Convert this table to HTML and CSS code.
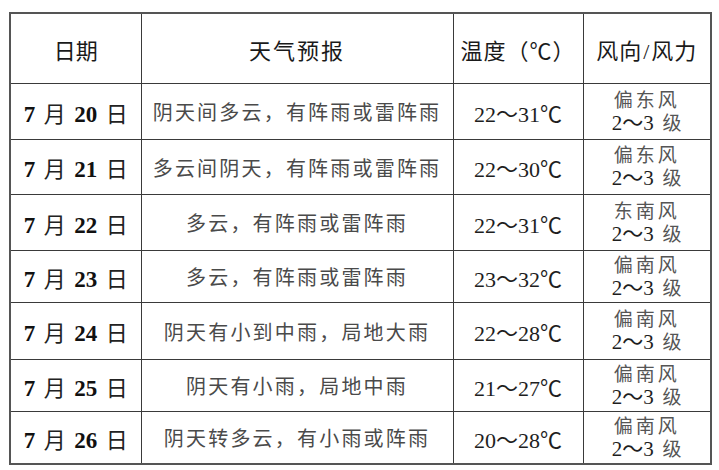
FILE: index.html
```html
<!DOCTYPE html>
<html lang="zh-CN">
<head>
<meta charset="utf-8">
<title>天气预报</title>
<link rel="stylesheet" href="styles.css">
</head>
<body>
<div class="page">
<table class="forecast">
  <colgroup>
    <col class="c-date">
    <col class="c-desc">
    <col class="c-temp">
    <col class="c-wind">
  </colgroup>
  <thead>
    <tr class="head">
      <th class="h-date">日期</th>
      <th class="h-desc">天气预报</th>
      <th class="h-temp">温度（℃）</th>
      <th class="h-wind">风向<span class="slash">/</span>风力</th>
    </tr>
  </thead>
  <tbody>
    <tr>
      <td class="date"><b>7</b> 月 <b>20</b> 日</td>
      <td class="desc">阴天间多云，有阵雨或雷阵雨</td>
      <td class="temp">22～31℃</td>
      <td class="wind"><span class="dir">偏东风</span><span class="lvl"><span class="num">2～3</span> 级</span></td>
    </tr>
    <tr>
      <td class="date"><b>7</b> 月 <b>21</b> 日</td>
      <td class="desc">多云间阴天，有阵雨或雷阵雨</td>
      <td class="temp">22～30℃</td>
      <td class="wind"><span class="dir">偏东风</span><span class="lvl"><span class="num">2～3</span> 级</span></td>
    </tr>
    <tr>
      <td class="date"><b>7</b> 月 <b>22</b> 日</td>
      <td class="desc">多云，有阵雨或雷阵雨</td>
      <td class="temp">22～31℃</td>
      <td class="wind"><span class="dir">东南风</span><span class="lvl"><span class="num">2～3</span> 级</span></td>
    </tr>
    <tr>
      <td class="date"><b>7</b> 月 <b>23</b> 日</td>
      <td class="desc">多云，有阵雨或雷阵雨</td>
      <td class="temp">23～32℃</td>
      <td class="wind"><span class="dir">偏南风</span><span class="lvl"><span class="num">2～3</span> 级</span></td>
    </tr>
    <tr>
      <td class="date"><b>7</b> 月 <b>24</b> 日</td>
      <td class="desc">阴天有小到中雨，局地大雨</td>
      <td class="temp">22～28℃</td>
      <td class="wind"><span class="dir">偏南风</span><span class="lvl"><span class="num">2～3</span> 级</span></td>
    </tr>
    <tr>
      <td class="date"><b>7</b> 月 <b>25</b> 日</td>
      <td class="desc">阴天有小雨，局地中雨</td>
      <td class="temp">21～27℃</td>
      <td class="wind"><span class="dir">偏南风</span><span class="lvl"><span class="num">2～3</span> 级</span></td>
    </tr>
    <tr>
      <td class="date"><b>7</b> 月 <b>26</b> 日</td>
      <td class="desc">阴天转多云，有小雨或阵雨</td>
      <td class="temp">20～28℃</td>
      <td class="wind"><span class="dir">偏南风</span><span class="lvl"><span class="num">2～3</span> 级</span></td>
    </tr>
  </tbody>
</table>
</div>
</body>
</html>
```
FILE: styles.css
```css
html, body {
  margin: 0;
  padding: 0;
  background: #ffffff;
}

.page {
  padding: 12px 0 0 9px;
}

.forecast {
  border-collapse: collapse;
  table-layout: fixed;
  width: 701px;
  border: 2px solid #555555;
  font-family: "Liberation Serif", "Noto Sans CJK SC", serif;
  color: #222222;
}

.c-date { width: 131px; }
.c-desc { width: 312px; }
.c-temp { width: 130px; }
.c-wind { width: 128px; }

.forecast th,
.forecast td {
  border: 1px solid #3a3a3a;
  padding: 0;
  text-align: center;
  vertical-align: middle;
}

.forecast th {
  font-weight: 400;
  font-size: 22px;
  height: 69px;
  color: #1a1a1a;
}

.h-desc { letter-spacing: 2px; }
.h-temp { letter-spacing: 1px; }
.h-wind { letter-spacing: 1px; }
.slash { margin: 0 1px; }

.forecast tbody tr:nth-child(1) td { height: 55px; }
.forecast tbody tr:nth-child(2) td { height: 54px; }
.forecast tbody tr:nth-child(3) td { height: 55px; }
.forecast tbody tr:nth-child(4) td { height: 51px; }
.forecast tbody tr:nth-child(5) td { height: 56px; }
.forecast tbody tr:nth-child(6) td { height: 51px; }
.forecast tbody tr:nth-child(7) td { height: 51px; }

.date {
  font-size: 22px;
  word-spacing: 3px;
  color: #222222;
}

.date b {
  font-weight: 700;
  font-size: 23px;
  color: #111111;
}

.desc {
  font-size: 20px;
  letter-spacing: 2.2px;
  color: #4a4a4a;
}

.temp {
  font-size: 22px;
  color: #1e1e1e;
}

.wind {
  font-size: 19px;
  line-height: 23px;
}

.wind .dir {
  display: block;
  letter-spacing: 3px;
  color: #555555;
}

.wind .lvl {
  display: block;
  word-spacing: 4px;
  color: #555555;
}

.wind .num {
  font-size: 21px;
  color: #1e1e1e;
}
```
